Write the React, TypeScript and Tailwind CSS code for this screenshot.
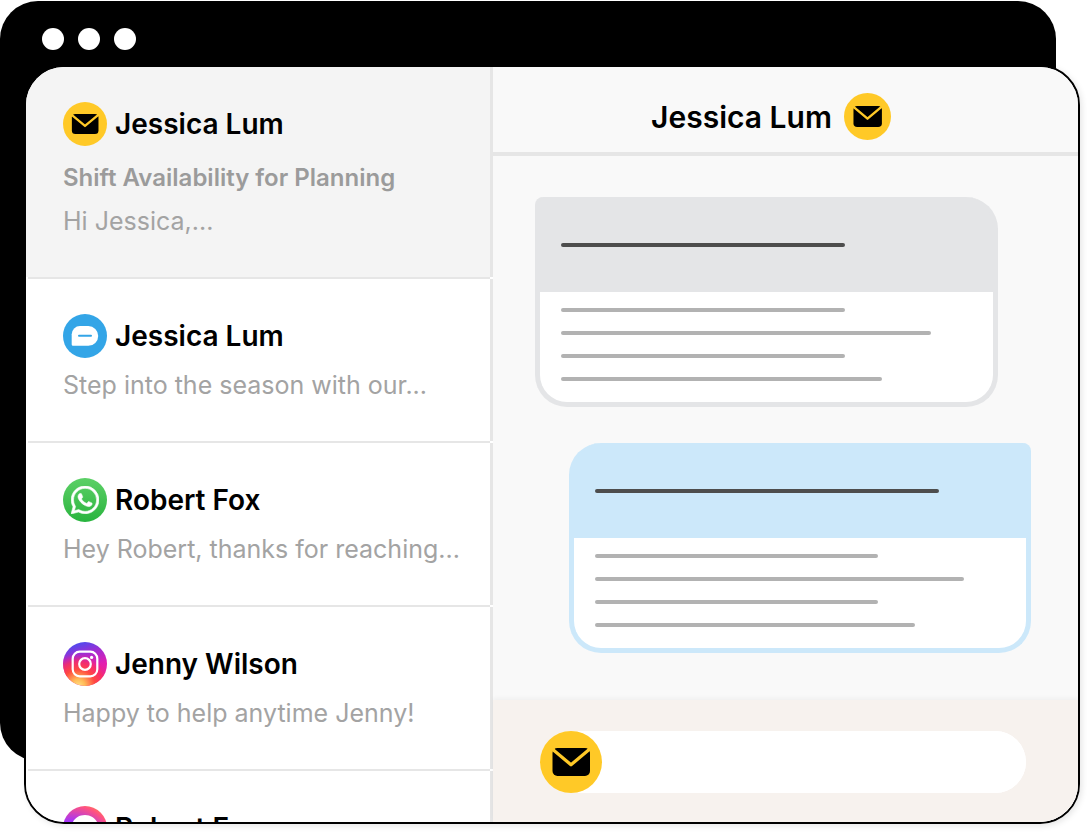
import { SiWhatsapp } from "react-icons/si";

type Channel = "mail" | "sms" | "whatsapp" | "instagram" | "messenger";

interface Conversation {
    id: number;
    name: string;
    channel: Channel;
    subject?: string;
    preview: string;
}

const conversations: Conversation[] = [
    {
        id: 1,
        name: "Jessica Lum",
        channel: "mail",
        subject: "Shift Availability for Planning",
        preview: "Hi Jessica,...",
    },
    {
        id: 2,
        name: "Jessica Lum",
        channel: "sms",
        preview: "Step into the season with our...",
    },
    {
        id: 3,
        name: "Robert Fox",
        channel: "whatsapp",
        preview: "Hey Robert, thanks for reaching...",
    },
    {
        id: 4,
        name: "Jenny Wilson",
        channel: "instagram",
        preview: "Happy to help anytime Jenny!",
    },
    { id: 5, name: "Robert Fox", channel: "messenger", preview: "" },
];

const MailIcon = ({ className }: { className: string }) => (
    <svg viewBox="0 0 62 62" className={className} aria-hidden="true">
        <circle cx="31" cy="31" r="31" fill="#ffc927" />
        <rect x="12.5" y="17" width="37.5" height="28" rx="5" />
        <path
            d="M11 17 31 33.8 51 17"
            fill="none"
            stroke="#ffc927"
            strokeWidth="3.2"
            strokeLinejoin="round"
        />
    </svg>
);

const SmsIcon = () => (
    <svg viewBox="0 0 44 44" className="size-11" aria-hidden="true">
        <circle cx="22" cy="22" r="22" fill="#33a5e7" />
        <path
            d="M17 12h8.300a9.900 9.900 0 0 1 0 19.800H10a1.300 1.300 0 0 1-1.300-1.300V20.300A8.300 8.300 0 0 1 17 12Z"
            fill="#fff"
        />
        <path
            d="M16 21.800h12"
            stroke="#33a5e7"
            strokeWidth="2"
            strokeLinecap="round"
        />
    </svg>
);

const WhatsappIcon = () => (
    <span className="flex size-11 items-center justify-center rounded-full bg-linear-to-b from-[#5bd066] to-[#27b43e]">
        <SiWhatsapp
            className="size-7 stroke-white text-white"
            strokeWidth="0.5"
            aria-hidden="true"
        />
    </span>
);

const InstagramIcon = () => (
    <svg viewBox="0 0 44 44" className="size-11" aria-hidden="true">
        <defs>
            <linearGradient id="ig-top" x1="0.35" y1="0" x2="0.65" y2="1">
                <stop offset="0" stopColor="#4a4df0" />
                <stop offset="0.3" stopColor="#a52bd0" />
                <stop offset="0.6" stopColor="#e31fb0" />
                <stop offset="1" stopColor="#f02c80" />
            </linearGradient>
            <radialGradient id="ig-warm" cx="0.35" cy="1" r="0.75">
                <stop offset="0" stopColor="#ffe185" />
                <stop offset="0.2" stopColor="#ffbb58" />
                <stop offset="0.5" stopColor="#ff4a40" />
                <stop offset="0.75" stopColor="#ff2f55" stopOpacity="0.7" />
                <stop offset="1" stopColor="#e020a0" stopOpacity="0" />
            </radialGradient>
        </defs>
        <circle cx="22" cy="22" r="22" fill="url(#ig-top)" />
        <circle cx="22" cy="22" r="22" fill="url(#ig-warm)" />
        <g fill="none" stroke="#fff" strokeWidth="2.2">
            <rect x="9.700" y="9.700" width="24.600" height="24.600" rx="7" />
            <circle cx="22" cy="22" r="5.800" />
        </g>
        <circle cx="28.600" cy="15.400" r="1.600" fill="#fff" />
    </svg>
);

const MessengerIcon = () => (
    <svg viewBox="0 0 44 44" className="size-11" aria-hidden="true">
        <defs>
            <radialGradient id="messenger" cx="0.2" cy="1" r="1.1">
                <stop offset="0" stopColor="#0099ff" />
                <stop offset="0.58" stopColor="#a033ff" />
                <stop offset="0.92" stopColor="#ff5280" />
                <stop offset="1" stopColor="#ff7061" />
            </radialGradient>
        </defs>
        <circle cx="22" cy="22" r="22" fill="url(#messenger)" />
        <path
            d="M22 9C14 9 8.500 14.700 8.500 22c0 4 1.600 7.300 4.300 9.700V36l4.200-2.200c1.600.5 3.300.7 5 .7 8 0 13.500-5.500 13.500-12.500S30 9 22 9Z"
            fill="#fff"
        />
    </svg>
);

const ChannelIcon = ({ channel }: { channel: Channel }) => {
    if (channel === "mail") return <MailIcon className="size-11" />;
    if (channel === "sms") return <SmsIcon />;
    if (channel === "whatsapp") return <WhatsappIcon />;
    if (channel === "instagram") return <InstagramIcon />;
    return <MessengerIcon />;
};

const ConversationRow = ({
    conversation,
    active,
}: {
    conversation: Conversation;
    active: boolean;
}) => (
    <li>
        <button
            type="button"
            className={`block w-full border-r-3 border-[#e6e6e6] pt-[35px] pr-4 pb-10 pl-[37px] text-left ${
                active ? "bg-[#f4f4f4]" : "bg-white"
            }`}
        >
            <span className="flex items-center gap-2">
                <ChannelIcon channel={conversation.channel} />
                <span className="text-[28px] leading-8 font-semibold whitespace-nowrap text-black">
                    {conversation.name}
                </span>
            </span>
            {conversation.subject && (
                <span className="mt-4 block truncate text-[24px] leading-8 font-semibold text-[#9b9b9b]">
                    {conversation.subject}
                </span>
            )}
            <span className="mt-[11px] block truncate text-[25px] leading-8 text-[#a3a3a3]">
                {conversation.preview}
            </span>
        </button>
        <div className="mr-[3px] ml-[2px] h-[2px] bg-[#e6e6e6]" />
    </li>
);

const BodyLines = () => (
    <div className="flex flex-col gap-[19px] rounded-b-[27px] bg-white px-[21px] pt-4 pb-[21px]">
        <div className="h-1 w-[69%] rounded-full bg-[#b2b2b2]" />
        <div className="h-1 w-[90%] rounded-full bg-[#b2b2b2]" />
        <div className="h-1 w-[69%] rounded-full bg-[#b2b2b2]" />
        <div className="h-1 w-[78%] rounded-full bg-[#b2b2b2]" />
    </div>
);

const App = () => {
    return (
        <main className="grid min-h-screen content-start bg-white pt-px pb-2 font-['Inter','Liberation_Sans',sans-serif]">
            {/* back window with the traffic-light dots */}
            <div className="col-start-1 row-start-1 mr-[31px] mb-[63px] rounded-[38px] bg-black">
                <div className="flex gap-[14px] pt-[27px] pl-[42px]">
                    <span className="size-[22px] rounded-full bg-white" />
                    <span className="size-[22px] rounded-full bg-white" />
                    <span className="size-[22px] rounded-full bg-white" />
                </div>
            </div>

            <div className="col-start-1 row-start-1 mt-16 mr-[7px] ml-6 grid grid-cols-[467fr_585fr] overflow-hidden rounded-[40px] border-2 border-black bg-white shadow-[2px_2px_6px_rgba(0,0,0,0.1)]">
                {/* the list takes the height of the chat and is cut off below it */}
                <ul className="h-0 min-h-full overflow-hidden">
                    {conversations.map((conversation) => (
                        <ConversationRow
                            key={conversation.id}
                            conversation={conversation}
                            active={conversation.id === 1}
                        />
                    ))}
                </ul>

                <section className="flex min-w-0 flex-col bg-[#f9f9f9]">
                    <header className="flex items-center justify-center gap-3 border-b-4 border-[#e6e6e6] pt-[26px] pr-[29px] pb-3">
                        <h1 className="text-[30px] leading-10 font-semibold text-black">
                            Jessica Lum
                        </h1>
                        <MailIcon className="size-[47px]" />
                    </header>

                    <div className="flex flex-1 flex-col gap-9 pt-[41px] pr-[47px] pb-[47px] pl-[42px]">
                        <div className="mr-[33px] rounded-[32px] rounded-tl-lg border-5 border-t-0 border-[#e4e5e7] bg-[#e4e5e7]">
                            <div className="px-[21px] pt-[46px] pb-[45px]">
                                <div className="h-1 w-[69%] rounded-full bg-[#4d4d4d]" />
                            </div>
                            <BodyLines />
                        </div>

                        <div className="ml-[34px] rounded-[32px] rounded-tr-lg border-5 border-t-0 border-[#cce8fa] bg-[#cce8fa]">
                            <div className="px-[21px] pt-[46px] pb-[45px]">
                                <div className="h-1 w-[84%] rounded-full bg-[#4d4d4d]" />
                            </div>
                            <BodyLines />
                        </div>
                    </div>

                    <form className="bg-[#f7f2ee] pt-[31px] pr-[52px] pb-[29px] pl-[47px] shadow-[0_-2px_4px_rgba(0,0,0,0.04)]">
                        <label className="flex items-center rounded-full bg-white">
                            <MailIcon className="size-[62px] shrink-0" />
                            <input
                                type="text"
                                aria-label="Reply by email"
                                className="h-[62px] min-w-0 flex-1 rounded-r-full bg-white px-4 text-[25px] outline-none"
                            />
                        </label>
                    </form>
                </section>
            </div>
        </main>
    );
};

export default App;
